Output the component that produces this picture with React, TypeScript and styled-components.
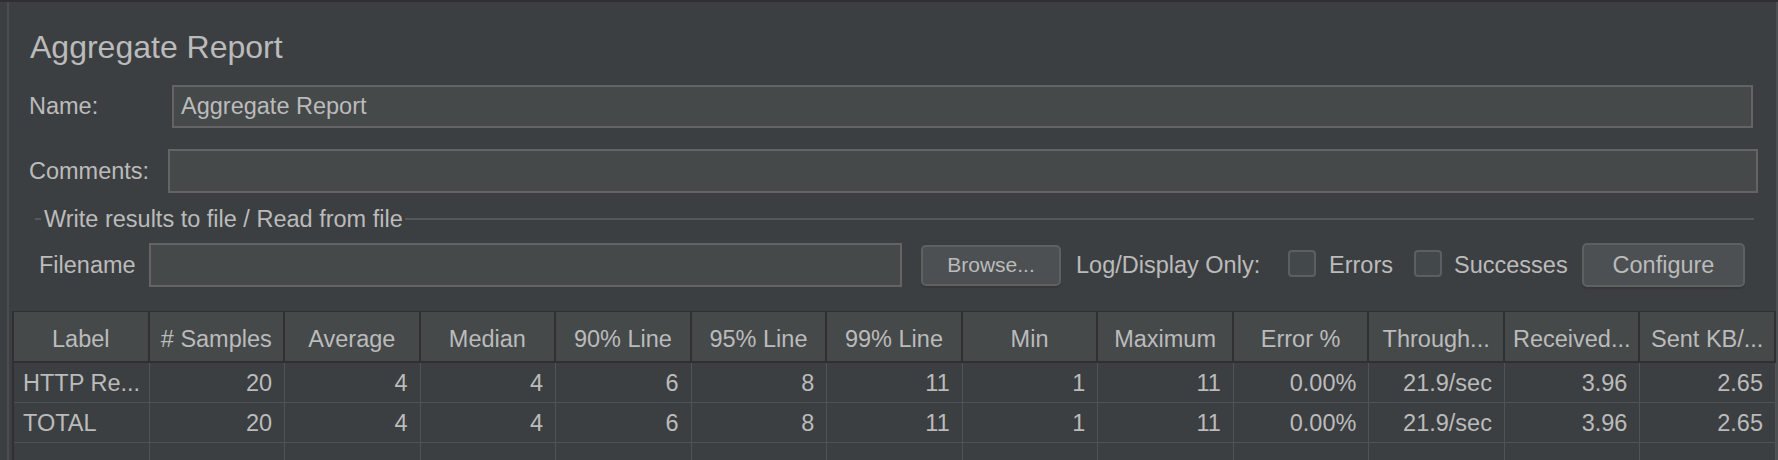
import React from 'react';
import styled, {createGlobalStyle} from 'styled-components';

const Global = createGlobalStyle`
  html, body {
    margin: 0;
    padding: 0;
    background: #3c3f41;
  }
  body {
    font-family: "Liberation Sans", Arial, sans-serif;
    color: #bbbbbb;
    overflow: hidden;
  }
`;

const columns = [
  'Label',
  '# Samples',
  'Average',
  'Median',
  '90% Line',
  '95% Line',
  '99% Line',
  'Min',
  'Maximum',
  'Error %',
  'Through...',
  'Received...',
  'Sent KB/...',
];

const rows = [
  ['HTTP Re...', '20', '4', '4', '6', '8', '11', '1', '11', '0.00%', '21.9/sec', '3.96', '2.65'],
  ['TOTAL', '20', '4', '4', '6', '8', '11', '1', '11', '0.00%', '21.9/sec', '3.96', '2.65'],
  ['', '', '', '', '', '', '', '', '', '', '', '', ''],
];

const Window = styled.div`
  width: 1778px;
  height: 460px;
  overflow: hidden;
  display: flex;
  flex-direction: column;
`;

const TopStrip = styled.div`
  height: 4px;
  background: #393b3d;
  border-bottom: 2px solid #2e3032;
`;

const Panel = styled.div`
  flex: 1;
  margin-left: 7px;
  border-left: 2px solid #4a4d4f;
  border-right: 2px solid #4d5052;
  display: flex;
  flex-direction: column;
`;

const Form = styled.div`
  padding-left: 20px;
  display: flex;
  flex-direction: column;
`;

const Title = styled.div`
  margin-top: 27px;
  margin-left: 1px;
  height: 36px;
  line-height: 36px;
  font-size: 32px;
  white-space: nowrap;
`;

const FieldRow = styled.div<{$top: number; $right: number; $height: number}>`
  display: flex;
  align-items: center;
  margin-top: ${(p) => p.$top}px;
  margin-right: ${(p) => p.$right}px;
  height: ${(p) => p.$height}px;
`;

const FieldLabel = styled.div<{$width: number}>`
  flex: 0 0 ${(p) => p.$width}px;
  font-size: 23.5px;
  white-space: nowrap;
`;

const TextInput = styled.input`
  flex: 1;
  min-width: 0;
  height: 100%;
  box-sizing: border-box;
  margin: 0;
  padding: 0 7px;
  background: #45494a;
  border: 2px solid #646464;
  color: #bbbbbb;
  font-family: "Liberation Sans", Arial, sans-serif;
  font-size: 23.5px;
  outline: none;
`;

const Group = styled.div`
  margin-top: 12px;
  margin-left: 6px;
  margin-right: 22px;
  display: flex;
  flex-direction: column;
`;

const GroupTitle = styled.div`
  height: 28px;
  display: flex;
  align-items: center;
  font-size: 23.5px;
  white-space: nowrap;
  &::before {
    content: '';
    flex: 0 0 6px;
    height: 2px;
    background: #55585a;
    margin-right: 3px;
  }
  &::after {
    content: '';
    flex: 1;
    height: 2px;
    background: #55585a;
    margin-left: 2px;
  }
`;

const FileRow = styled.div`
  margin-top: 10px;
  margin-left: 4px;
  height: 44px;
  display: flex;
  align-items: center;
  margin-right: 5px;
`;

const FileInput = styled(TextInput)`
  flex: 0 0 753px;
`;

const Button = styled.button<{$width: number; $height: number; $left: number}>`
  flex: 0 0 ${(p) => p.$width}px;
  height: ${(p) => p.$height}px;
  margin-left: ${(p) => p.$left}px;
  box-sizing: border-box;
  padding: 0;
  background: #4c5052;
  border: 2px solid #5e6162;
  border-radius: 5px;
  box-shadow: 0 2px 1px #36383a;
  color: #bbbbbb;
  font-family: "Liberation Sans", Arial, sans-serif;
  font-size: ${(p) => (p.$height > 42 ? 23.5 : 21)}px;
`;

const InlineLabel = styled.div<{$width: number; $left: number}>`
  flex: 0 0 ${(p) => p.$width}px;
  margin-left: ${(p) => p.$left}px;
  font-size: 23.5px;
  white-space: nowrap;
`;

const Check = styled.span`
  flex: 0 0 28px;
  height: 27px;
  box-sizing: border-box;
  background: #43494a;
  border: 2px solid #5c5f61;
  border-radius: 4px;
  margin-top: -4px;
`;

const Table = styled.div`
  margin-top: 24px;
  margin-left: 3px;
  display: grid;
  grid-template-columns: repeat(13, 1fr);
  border-top: 1px solid #2e3032;
  border-left: 2px solid #2e3032;
`;

const HeadCell = styled.div`
  height: 51px;
  padding-top: 6px;
  box-sizing: border-box;
  background: #45494a;
  border-right: 2px solid #2e3032;
  border-bottom: 2px solid #2e3032;
  display: flex;
  align-items: center;
  justify-content: center;
  font-size: 23.5px;
  white-space: nowrap;
  overflow: hidden;
`;

const BodyCell = styled.div<{$left: boolean}>`
  height: 40px;
  box-sizing: border-box;
  border-right: 1px solid #505355;
  border-bottom: 1px solid #505355;
  display: flex;
  align-items: center;
  justify-content: ${(p) => (p.$left ? 'flex-start' : 'flex-end')};
  padding: 2px 12px 0 9px;
  font-size: 23.5px;
  white-space: nowrap;
  overflow: hidden;
`;

export default function App() {
  return (
    <>
      <Global />
      <Window>
        <TopStrip />
        <Panel>
          <Form>
            <Title>Aggregate Report</Title>
            <FieldRow $top={20} $right={23} $height={43}>
              <FieldLabel $width={143}>Name:</FieldLabel>
              <TextInput defaultValue="Aggregate Report" readOnly />
            </FieldRow>
            <FieldRow $top={21} $right={18} $height={44}>
              <FieldLabel $width={139}>Comments:</FieldLabel>
              <TextInput defaultValue="" readOnly />
            </FieldRow>
            <Group>
              <GroupTitle>Write results to file / Read from file</GroupTitle>
              <FileRow>
                <FieldLabel $width={110}>Filename</FieldLabel>
                <FileInput defaultValue="" readOnly />
                <Button $width={140} $height={41} $left={19}>
                  Browse...
                </Button>
                <InlineLabel $width={212} $left={15}>
                  Log/Display Only:
                </InlineLabel>
                <Check />
                <InlineLabel $width={85} $left={13}>
                  Errors
                </InlineLabel>
                <Check />
                <InlineLabel $width={128} $left={12}>
                  Successes
                </InlineLabel>
                <Button $width={163} $height={44} $left={0}>
                  Configure
                </Button>
              </FileRow>
            </Group>
          </Form>
          <Table>
            {columns.map((c) => (
              <HeadCell key={c}>{c}</HeadCell>
            ))}
            {rows.map((r, i) =>
              r.map((v, j) => (
                <BodyCell key={`${i}-${j}`} $left={j === 0}>
                  {v}
                </BodyCell>
              ))
            )}
          </Table>
        </Panel>
      </Window>
    </>
  );
}
